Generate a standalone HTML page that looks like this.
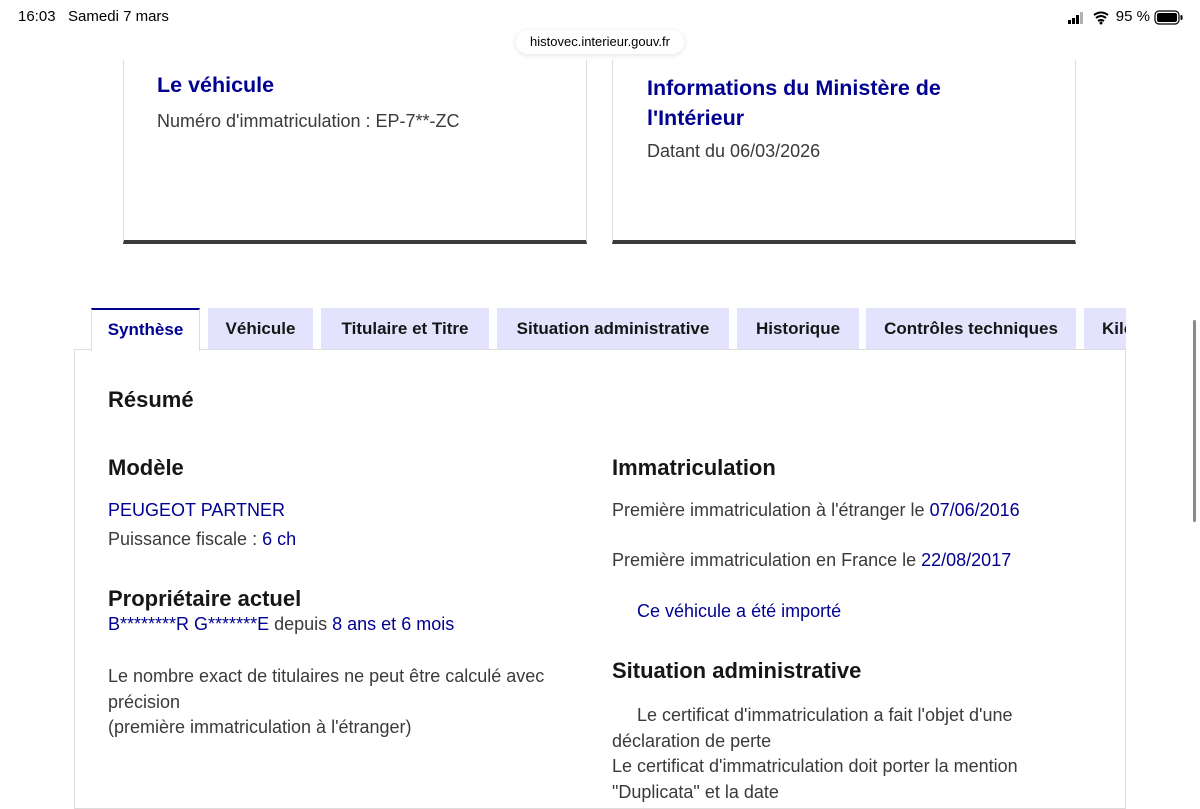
<!DOCTYPE html>
<html><head><meta charset="utf-8"><style>
*{margin:0;padding:0;box-sizing:border-box}
body{width:1200px;height:788px;overflow:hidden;background:#fff;font-family:"Liberation Sans",sans-serif;position:relative;color:#3a3a3a}
.a{position:absolute;white-space:nowrap}
.t{font-size:18px;color:#3a3a3a}
.b{color:#000091}
.h{font-size:22px;font-weight:bold;color:#161616}
.card{position:absolute;top:60px;height:184px;width:464px;border:1px solid #ddd;border-top:none;border-bottom:4px solid #3a3a3a}
.tab{position:absolute;top:308px;height:41px;background:#e3e3fd;font-size:17px;font-weight:bold;color:#161616;text-align:center;line-height:41px;overflow:hidden;white-space:nowrap}
</style></head><body>
<div class="a" style="left:18px;top:8px;font-size:15px;color:#000">16:03&nbsp;&nbsp; Samedi 7 mars</div>
<div class="a" style="right:50px;top:8px;font-size:15px;color:#000">95 %</div>
<svg class="a" style="left:1068px;top:11px" width="50" height="14"><rect x="0" y="9" width="3" height="4" fill="#000"/><rect x="4" y="7" width="3" height="6" fill="#000"/><rect x="8" y="4" width="3" height="9" fill="#000"/><rect x="12" y="1" width="3" height="12" fill="#000" opacity=".3"/><path d="M26 4 Q33 -1 40 4 M28 7 Q33 3 38 7 M30 10 Q33 8 36 10" stroke="#000" stroke-width="2" fill="none"/><circle cx="33" cy="12" r="1.5" fill="#000"/></svg>
<svg class="a" style="left:1154px;top:10px" width="30" height="15"><rect x="1" y="1" width="24" height="13" rx="4" fill="none" stroke="#000" stroke-width="1.2"/><rect x="3" y="3" width="20" height="9" rx="2" fill="#000"/><rect x="26.5" y="5" width="2" height="5" rx="1" fill="#000"/></svg>
<div class="a" style="left:516px;top:30px;width:168px;height:24px;background:#fff;border-radius:12px;box-shadow:0 1px 6px rgba(0,0,0,.12);font-size:13px;color:#000;text-align:center;line-height:24px">histovec.interieur.gouv.fr</div>
<div class="card" style="left:123px"></div>
<div class="card" style="left:612px"></div>
<div class="a h b" style="left:157px;top:73px;color:#000091;font-size:21.5px">Le véhicule</div>
<div class="a t" style="left:157px;top:111px">Numéro d'immatriculation : EP-7**-ZC</div>
<div class="a h" style="left:647px;top:73px;color:#000091;line-height:30px;white-space:normal;width:330px;font-size:21.5px">Informations du Ministère de l'Intérieur</div>
<div class="a t" style="left:647px;top:141px">Datant du 06/03/2026</div>
<div class="a" style="left:74px;top:349px;width:1052px;height:460px;border:1px solid #ddd"></div>
<div class="tab" style="left:91px;width:109px;background:#fff;border-top:2px solid #000091;color:#000091;height:43px;line-height:39px;border-left:1px solid #ddd;border-right:1px solid #ddd">Synthèse</div>
<div class="tab" style="left:208px;width:105px">Véhicule</div>
<div class="tab" style="left:321px;width:168px">Titulaire et Titre</div>
<div class="tab" style="left:497px;width:232px">Situation administrative</div>
<div class="tab" style="left:737px;width:122px">Historique</div>
<div class="tab" style="left:866px;width:210px">Contrôles techniques</div>
<div class="tab" style="left:1084px;width:42px;text-align:left;padding-left:18px">Kilométrage</div>
<div class="a" style="left:1193px;top:320px;width:3px;height:202px;background:#8a8a8a;border-radius:2px"></div>
<div class="a h" style="left:108px;top:387px">Résumé</div>
<div class="a h" style="left:108px;top:455px">Modèle</div>
<div class="a t b" style="left:108px;top:500px;color:#000091">PEUGEOT PARTNER</div>
<div class="a t" style="left:108px;top:529px">Puissance fiscale : <span class="b">6 ch</span></div>
<div class="a h" style="left:108px;top:586px">Propriétaire actuel</div>
<div class="a t" style="left:108px;top:614px"><span class="b">B********R G*******E</span> depuis <span class="b">8 ans et 6 mois</span></div>
<div class="a t" style="left:108px;top:664px;line-height:25.5px">Le nombre exact de titulaires ne peut être calculé avec<br>précision<br>(première immatriculation à l'étranger)</div>
<div class="a h" style="left:612px;top:455px">Immatriculation</div>
<div class="a t" style="left:612px;top:500px">Première immatriculation à l'étranger le <span class="b">07/06/2016</span></div>
<div class="a t" style="left:612px;top:550px">Première immatriculation en France le <span class="b">22/08/2017</span></div>
<div class="a t b" style="left:637px;top:601px;color:#000091">Ce véhicule a été importé</div>
<div class="a h" style="left:612px;top:658px">Situation administrative</div>
<div class="a t" style="left:612px;top:703px;line-height:25.5px">&nbsp;&nbsp;&nbsp;&nbsp;&nbsp;Le certificat d'immatriculation a fait l'objet d'une<br>déclaration de perte<br>Le certificat d'immatriculation doit porter la mention<br>"Duplicata" et la date</div>
</body></html>
